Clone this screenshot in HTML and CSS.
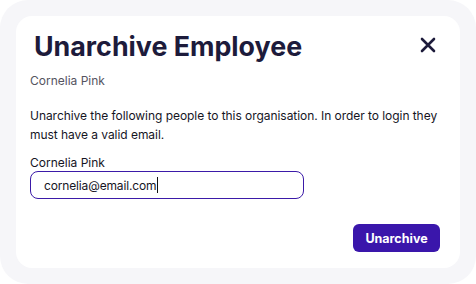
FILE: index.html
```html
<!DOCTYPE html>
<html>
<head>
<meta charset="utf-8">
<link rel="stylesheet" href="styles.css">
</head>
<body>
<div class="frame">
  <div class="card">
    <div class="header">
      <h1 class="title">Unarchive Employee</h1>
      <button class="close" aria-label="Close">
        <svg width="16" height="16" viewBox="0 0 16 16"><path d="M2 2 L14 14 M14 2 L2 14" stroke="#1d1b3b" stroke-width="2.6" stroke-linecap="round"/></svg>
      </button>
    </div>
    <div class="subtitle">Cornelia Pink</div>
    <p class="desc">Unarchive the following people to this organisation. In order to login they must have a valid email.</p>
    <label class="label">Cornelia Pink</label>
    <div class="input"><span class="value">cornelia@email.com</span><span class="caret"></span></div>
    <div class="actions">
      <button class="primary">Unarchive</button>
    </div>
  </div>
</div>
</body>
</html>
```
FILE: styles.css
```css
* { box-sizing: border-box; }
html, body { margin: 0; padding: 0; background: #ffffff; }
body { font-family: Inter, "Noto Sans", sans-serif; }
.frame {
  width: 476px;
  height: 284px;
  background: #f6f6f9;
  border-radius: 28px;
  padding: 16px;
}
.card {
  background: #ffffff;
  border-radius: 16px;
  height: 252px;
  width: 444px;
  padding: 15px 20px 0 14px;
  display: flex;
  flex-direction: column;
}
.header {
  display: flex;
  justify-content: space-between;
  align-items: center;
}
.title {
  margin: 0 0 0 4px;
  font-size: 26.8px;
  line-height: 30px;
  font-weight: 700;
  color: #1d1b3b;
}
.close {
  background: none;
  border: 0;
  padding: 0;
  width: 16px;
  height: 16px;
  margin-right: 4px;
  margin-top: -2px;
  display: flex;
}
.subtitle {
  margin-top: 12px;
  font-size: 12px;
  line-height: 16px;
  color: #55545f;
}
.desc {
  margin: 17px 0 0 0;
  font-size: 12px;
  line-height: 19px;
  color: #16151f;
  letter-spacing: -0.05px;
}
.label {
  margin-top: 11px;
  font-size: 12px;
  line-height: 16px;
  color: #16151f;
}
.input {
  margin-top: 0;
  width: 274px;
  height: 28px;
  border: 1px solid #3b1aa8;
  border-radius: 8px;
  padding: 0 13px;
  display: flex;
  align-items: center;
  font-size: 12px;
  letter-spacing: -0.15px;
  color: #16151f;
}
.caret {
  display: inline-block;
  width: 1px;
  height: 16px;
  background: #111;
  margin-left: 1px;
}
.actions {
  display: flex;
  justify-content: flex-end;
  margin-top: 25px;
}
.primary {
  background: #3a16ab;
  color: #ffffff;
  border: 0;
  border-radius: 6px;
  width: 87px;
  height: 28px;
  font-family: Inter, sans-serif;
  font-size: 12.5px;
  font-weight: 700;
}
```
